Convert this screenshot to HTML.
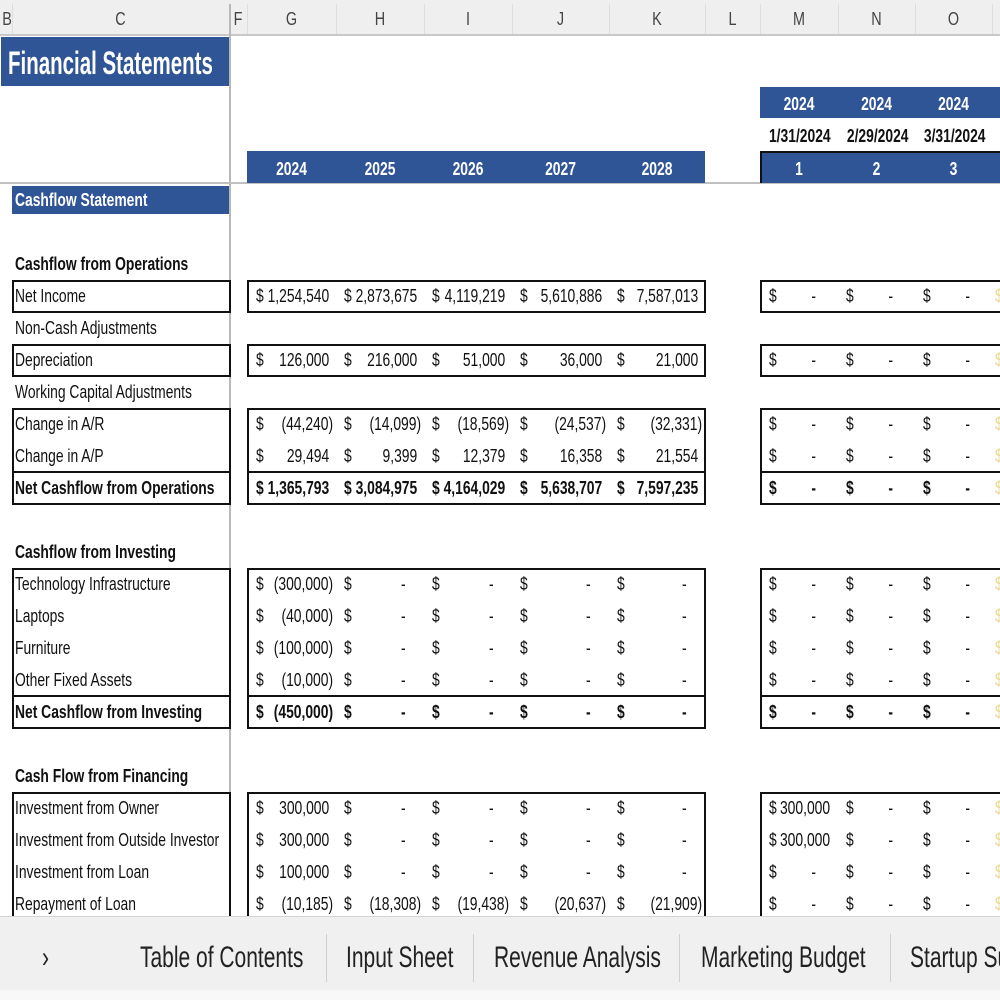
<!DOCTYPE html>
<html><head><meta charset="utf-8"><style>
*{margin:0;padding:0;box-sizing:border-box}
html,body{width:1000px;height:1000px;overflow:hidden}
body{background:#fff;position:relative;font-family:"Liberation Sans",sans-serif;color:#111}
#wrap{position:absolute;left:0;top:0;width:1000px;height:1000px;overflow:hidden}
.a{position:absolute}
.t{position:absolute;white-space:nowrap;font-size:18px;line-height:32px;height:32px;transform:scaleX(.77);transform-origin:left center}
.r{transform-origin:right center}
.b{font-weight:bold}
.w{color:#fff}
.c{transform-origin:center center;text-align:center}
.hd{position:absolute;top:0;height:35px;line-height:38px;font-size:18px;color:#444;text-align:center;transform:scaleX(.8)}
.bx{position:absolute;border:2px solid #111}
.ln{position:absolute;height:1.5px;background:#111}
.band{position:absolute;background:#2f5597}
.tab{position:absolute;top:936px;font-size:30px;line-height:44px;color:#222;white-space:nowrap;transform:scaleX(.70);transform-origin:left center}
.sep{position:absolute;top:934px;width:1px;height:48px;background:#d0d0d0}
</style></head><body><div id="wrap">
<!-- column header -->
<div class="a" style="left:0;top:0;width:1000px;height:36px;background:#efefef;border-bottom:2px solid #c8c8c8"></div>
<div class="hd" style="left:0;width:14px">B</div>
<div class="hd" style="left:12px;width:217px">C</div>
<div class="hd" style="left:229px;width:18px">F</div>
<div class="hd" style="left:247px;width:89px">G</div>
<div class="hd" style="left:336px;width:88px">H</div>
<div class="hd" style="left:424px;width:88px">I</div>
<div class="hd" style="left:512px;width:97px">J</div>
<div class="hd" style="left:609px;width:96px">K</div>
<div class="hd" style="left:705px;width:55px">L</div>
<div class="hd" style="left:760px;width:78px">M</div>
<div class="hd" style="left:838px;width:77px">N</div>
<div class="hd" style="left:915px;width:77px">O</div>
<div class="a" style="left:12px;top:4px;width:1px;height:30px;background:#ddd"></div>
<div class="a" style="left:247px;top:4px;width:1px;height:30px;background:#ddd"></div>
<div class="a" style="left:336px;top:4px;width:1px;height:30px;background:#ddd"></div>
<div class="a" style="left:424px;top:4px;width:1px;height:30px;background:#ddd"></div>
<div class="a" style="left:512px;top:4px;width:1px;height:30px;background:#ddd"></div>
<div class="a" style="left:609px;top:4px;width:1px;height:30px;background:#ddd"></div>
<div class="a" style="left:705px;top:4px;width:1px;height:30px;background:#ddd"></div>
<div class="a" style="left:760px;top:4px;width:1px;height:30px;background:#ddd"></div>
<div class="a" style="left:838px;top:4px;width:1px;height:30px;background:#ddd"></div>
<div class="a" style="left:915px;top:4px;width:1px;height:30px;background:#ddd"></div>
<div class="a" style="left:992px;top:4px;width:1px;height:30px;background:#ddd"></div>
<!-- freeze lines -->
<div class="a" style="left:229px;top:4px;width:2px;height:912px;background:#b8b8b8"></div>
<div class="a" style="left:0;top:182px;width:1000px;height:2px;background:#c0c0c0"></div>

<!-- title -->
<div class="band" style="left:1px;top:37px;width:228px;height:49px"></div>
<div class="t b w" style="left:8px;top:47px;font-size:32px;transform:scaleX(.64)">Financial Statements</div>
<!-- bands -->
<div class="band" style="left:247px;top:151px;width:458px;height:32px"></div>
<div class="t b w c" style="left:247px;top:153px;width:89px">2024</div>
<div class="t b w c" style="left:336px;top:153px;width:88px">2025</div>
<div class="t b w c" style="left:424px;top:153px;width:88px">2026</div>
<div class="t b w c" style="left:512px;top:153px;width:97px">2027</div>
<div class="t b w c" style="left:609px;top:153px;width:96px">2028</div>
<div class="band" style="left:760px;top:87px;width:240px;height:31px"></div>
<div class="t b w c" style="left:760px;top:88px;width:78px">2024</div>
<div class="t b w c" style="left:838px;top:88px;width:77px">2024</div>
<div class="t b w c" style="left:915px;top:88px;width:77px">2024</div>
<div class="t b c" style="left:760px;top:120px;width:78px">1/31/2024</div>
<div class="t b c" style="left:838px;top:120px;width:77px">2/29/2024</div>
<div class="t b c" style="left:915px;top:120px;width:77px">3/31/2024</div>
<div class="band" style="left:760px;top:151px;width:240px;height:32px;border-top:2px solid #111;border-left:2px solid #111"></div>
<div class="t b w c" style="left:760px;top:153px;width:78px">1</div>
<div class="t b w c" style="left:838px;top:153px;width:77px">2</div>
<div class="t b w c" style="left:915px;top:153px;width:77px">3</div>
<div class="band" style="left:12px;top:186px;width:217px;height:28px"></div>
<div class="t b w" style="left:15px;top:184px">Cashflow Statement</div>

<!-- boxes -->
<div class="bx" style="left:12px;top:280px;width:219px;height:33px"></div>
<div class="bx" style="left:247px;top:280px;width:459px;height:33px"></div>
<div class="bx" style="left:760px;top:280px;width:242px;height:33px"></div>
<div class="bx" style="left:12px;top:344px;width:219px;height:33px"></div>
<div class="bx" style="left:247px;top:344px;width:459px;height:33px"></div>
<div class="bx" style="left:760px;top:344px;width:242px;height:33px"></div>
<div class="bx" style="left:12px;top:408px;width:219px;height:97px"></div>
<div class="bx" style="left:247px;top:408px;width:459px;height:97px"></div>
<div class="bx" style="left:760px;top:408px;width:242px;height:97px"></div>
<div class="ln" style="left:12px;top:471px;width:219px"></div>
<div class="ln" style="left:247px;top:471px;width:459px"></div>
<div class="ln" style="left:760px;top:471px;width:240px"></div>
<div class="bx" style="left:12px;top:568px;width:219px;height:161px"></div>
<div class="bx" style="left:247px;top:568px;width:459px;height:161px"></div>
<div class="bx" style="left:760px;top:568px;width:242px;height:161px"></div>
<div class="ln" style="left:12px;top:695px;width:219px"></div>
<div class="ln" style="left:247px;top:695px;width:459px"></div>
<div class="ln" style="left:760px;top:695px;width:240px"></div>
<div class="bx" style="left:12px;top:792px;width:219px;height:140px"></div>
<div class="bx" style="left:247px;top:792px;width:459px;height:140px"></div>
<div class="bx" style="left:760px;top:792px;width:242px;height:140px"></div>

<!-- labels -->
<div class="t b" style="left:15px;top:248px">Cashflow from Operations</div>
<div class="t" style="left:15px;top:280px">Net Income</div>
<div class="t" style="left:15px;top:312px">Non-Cash Adjustments</div>
<div class="t" style="left:15px;top:344px">Depreciation</div>
<div class="t" style="left:15px;top:376px">Working Capital Adjustments</div>
<div class="t" style="left:15px;top:408px">Change in A/R</div>
<div class="t" style="left:15px;top:440px">Change in A/P</div>
<div class="t b" style="left:15px;top:472px">Net Cashflow from Operations</div>
<div class="t b" style="left:15px;top:536px">Cashflow from Investing</div>
<div class="t" style="left:15px;top:568px">Technology Infrastructure</div>
<div class="t" style="left:15px;top:600px">Laptops</div>
<div class="t" style="left:15px;top:632px">Furniture</div>
<div class="t" style="left:15px;top:664px">Other Fixed Assets</div>
<div class="t b" style="left:15px;top:696px">Net Cashflow from Investing</div>
<div class="t b" style="left:15px;top:760px">Cash Flow from Financing</div>
<div class="t" style="left:15px;top:792px">Investment from Owner</div>
<div class="t" style="left:15px;top:824px">Investment from Outside Investor</div>
<div class="t" style="left:15px;top:856px">Investment from Loan</div>
<div class="t" style="left:15px;top:888px">Repayment of Loan</div>

<!-- dollar signs annual -->
<div class="t" style="left:256px;top:280px;line-height:32px;height:auto">$<br><br>$<br><br>$<br>$<br><b>$</b><br><br><br>$<br>$<br>$<br>$<br><b>$</b><br><br><br>$<br>$<br>$<br>$</div>
<div class="t" style="left:344px;top:280px;line-height:32px;height:auto">$<br><br>$<br><br>$<br>$<br><b>$</b><br><br><br>$<br>$<br>$<br>$<br><b>$</b><br><br><br>$<br>$<br>$<br>$</div>
<div class="t" style="left:432px;top:280px;line-height:32px;height:auto">$<br><br>$<br><br>$<br>$<br><b>$</b><br><br><br>$<br>$<br>$<br>$<br><b>$</b><br><br><br>$<br>$<br>$<br>$</div>
<div class="t" style="left:520px;top:280px;line-height:32px;height:auto">$<br><br>$<br><br>$<br>$<br><b>$</b><br><br><br>$<br>$<br>$<br>$<br><b>$</b><br><br><br>$<br>$<br>$<br>$</div>
<div class="t" style="left:617px;top:280px;line-height:32px;height:auto">$<br><br>$<br><br>$<br>$<br><b>$</b><br><br><br>$<br>$<br>$<br>$<br><b>$</b><br><br><br>$<br>$<br>$<br>$</div>
<!-- dollar signs monthly -->
<div class="t" style="left:769px;top:280px;line-height:32px;height:auto">$<br><br>$<br><br>$<br>$<br><b>$</b><br><br><br>$<br>$<br>$<br>$<br><b>$</b><br><br><br>$<br>$<br>$<br>$</div>
<div class="t" style="left:846px;top:280px;line-height:32px;height:auto">$<br><br>$<br><br>$<br>$<br><b>$</b><br><br><br>$<br>$<br>$<br>$<br><b>$</b><br><br><br>$<br>$<br>$<br>$</div>
<div class="t" style="left:923px;top:280px;line-height:32px;height:auto">$<br><br>$<br><br>$<br>$<br><b>$</b><br><br><br>$<br>$<br>$<br>$<br><b>$</b><br><br><br>$<br>$<br>$<br>$</div>
<div class="t" style="left:995px;top:280px;line-height:32px;height:auto;color:#e8d890">$<br><br>$<br><br>$<br>$<br>$<br><br><br>$<br>$<br>$<br>$<br>$<br><br><br>$<br>$<br>$<br>$</div>
<!-- monthly dashes -->
<div class="t r" style="right:184px;top:280px;line-height:32px;height:auto;text-align:right">-<br><br>-<br><br>-<br>-<br><b>-</b><br><br><br>-<br>-<br>-<br>-<br><b>-</b><br><br><br><br><br>-<br>-</div>
<div class="t r" style="right:170px;top:792px">300,000</div>
<div class="t r" style="right:170px;top:824px">300,000</div>
<div class="t r" style="right:107px;top:280px;line-height:32px;height:auto;text-align:right">-<br><br>-<br><br>-<br>-<br><b>-</b><br><br><br>-<br>-<br>-<br>-<br><b>-</b><br><br><br>-<br>-<br>-<br>-</div>
<div class="t r" style="right:30px;top:280px;line-height:32px;height:auto;text-align:right">-<br><br>-<br><br>-<br>-<br><b>-</b><br><br><br>-<br>-<br>-<br>-<br><b>-</b><br><br><br>-<br>-<br>-<br>-</div>

<!-- G values -->
<div class="t r" style="right:667px;top:280px;line-height:32px;height:auto;text-align:right">1,254,540&nbsp;<br><br>126,000&nbsp;<br><br>(44,240)<br>29,494&nbsp;<br><b>1,365,793&nbsp;</b><br><br><br>(300,000)<br>(40,000)<br>(100,000)<br>(10,000)<br><b>(450,000)</b><br><br><br>300,000&nbsp;<br>300,000&nbsp;<br>100,000&nbsp;<br>(10,185)</div>
<!-- H -->
<div class="t r" style="right:579px;top:280px;line-height:32px;height:auto;text-align:right">2,873,675&nbsp;<br><br>216,000&nbsp;<br><br>(14,099)<br>9,399&nbsp;<br><b>3,084,975&nbsp;</b><br><br><br>-&nbsp;&nbsp;&nbsp;&nbsp;<br>-&nbsp;&nbsp;&nbsp;&nbsp;<br>-&nbsp;&nbsp;&nbsp;&nbsp;<br>-&nbsp;&nbsp;&nbsp;&nbsp;<br><b>-&nbsp;&nbsp;&nbsp;&nbsp;</b><br><br><br>-&nbsp;&nbsp;&nbsp;&nbsp;<br>-&nbsp;&nbsp;&nbsp;&nbsp;<br>-&nbsp;&nbsp;&nbsp;&nbsp;<br>(18,308)</div>
<!-- I -->
<div class="t r" style="right:491px;top:280px;line-height:32px;height:auto;text-align:right">4,119,219&nbsp;<br><br>51,000&nbsp;<br><br>(18,569)<br>12,379&nbsp;<br><b>4,164,029&nbsp;</b><br><br><br>-&nbsp;&nbsp;&nbsp;&nbsp;<br>-&nbsp;&nbsp;&nbsp;&nbsp;<br>-&nbsp;&nbsp;&nbsp;&nbsp;<br>-&nbsp;&nbsp;&nbsp;&nbsp;<br><b>-&nbsp;&nbsp;&nbsp;&nbsp;</b><br><br><br>-&nbsp;&nbsp;&nbsp;&nbsp;<br>-&nbsp;&nbsp;&nbsp;&nbsp;<br>-&nbsp;&nbsp;&nbsp;&nbsp;<br>(19,438)</div>
<!-- J -->
<div class="t r" style="right:394px;top:280px;line-height:32px;height:auto;text-align:right">5,610,886&nbsp;<br><br>36,000&nbsp;<br><br>(24,537)<br>16,358&nbsp;<br><b>5,638,707&nbsp;</b><br><br><br>-&nbsp;&nbsp;&nbsp;&nbsp;<br>-&nbsp;&nbsp;&nbsp;&nbsp;<br>-&nbsp;&nbsp;&nbsp;&nbsp;<br>-&nbsp;&nbsp;&nbsp;&nbsp;<br><b>-&nbsp;&nbsp;&nbsp;&nbsp;</b><br><br><br>-&nbsp;&nbsp;&nbsp;&nbsp;<br>-&nbsp;&nbsp;&nbsp;&nbsp;<br>-&nbsp;&nbsp;&nbsp;&nbsp;<br>(20,637)</div>
<!-- K -->
<div class="t r" style="right:298px;top:280px;line-height:32px;height:auto;text-align:right">7,587,013&nbsp;<br><br>21,000&nbsp;<br><br>(32,331)<br>21,554&nbsp;<br><b>7,597,235&nbsp;</b><br><br><br>-&nbsp;&nbsp;&nbsp;&nbsp;<br>-&nbsp;&nbsp;&nbsp;&nbsp;<br>-&nbsp;&nbsp;&nbsp;&nbsp;<br>-&nbsp;&nbsp;&nbsp;&nbsp;<br><b>-&nbsp;&nbsp;&nbsp;&nbsp;</b><br><br><br>-&nbsp;&nbsp;&nbsp;&nbsp;<br>-&nbsp;&nbsp;&nbsp;&nbsp;<br>-&nbsp;&nbsp;&nbsp;&nbsp;<br>(21,909)</div>

<!-- tab bar -->
<div class="a" style="left:0;top:916px;width:1000px;height:84px;background:#f0f0f0;border-top:1px solid #d4d4d4"></div>
<div class="a" style="left:0;top:990px;width:1000px;height:10px;background:#f8f8f8"></div>
<div class="tab" style="left:-6px;color:#888">‹</div>
<div class="tab" style="left:42px">›</div>
<div class="tab" style="left:140px">Table of Contents</div>
<div class="sep" style="left:326px"></div>
<div class="tab" style="left:346px">Input Sheet</div>
<div class="sep" style="left:473px"></div>
<div class="tab" style="left:494px">Revenue Analysis</div>
<div class="sep" style="left:679px"></div>
<div class="tab" style="left:701px">Marketing Budget</div>
<div class="sep" style="left:890px"></div>
<div class="tab" style="left:910px">Startup Su</div>
</div></body></html>
